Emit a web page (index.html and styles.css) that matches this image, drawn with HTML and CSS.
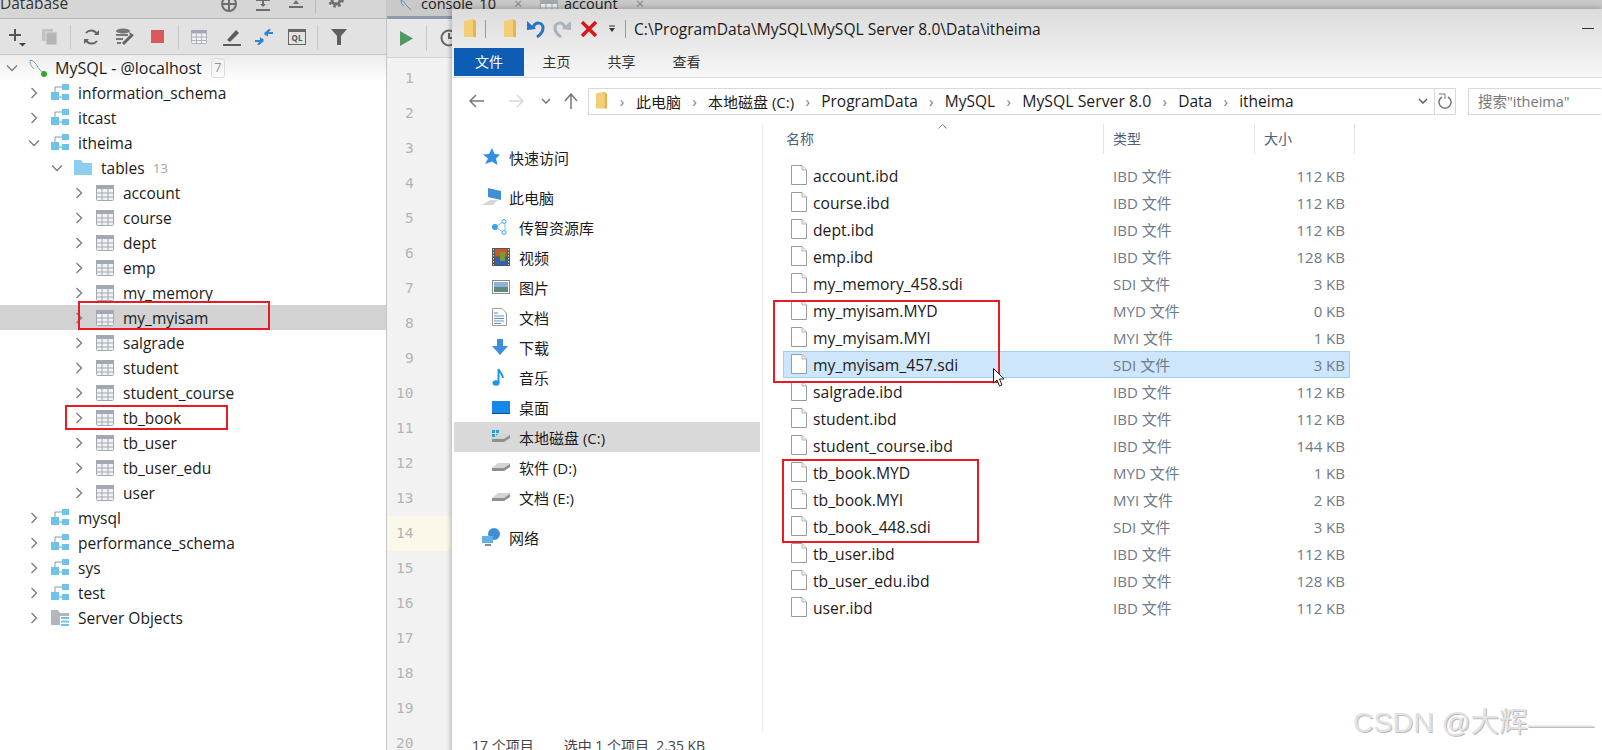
FILE: index.html
```html
<!DOCTYPE html>
<html lang="en">
<head>
    <meta charset="UTF-8">
    <meta name="viewport" content="width=device-width, initial-scale=1.0">
    <title>Database</title>
    <link rel="stylesheet" href="styles.css">
</head>
<body>
    <svg class="sprite" width="0" height="0">
        <symbol id="chev-r" viewBox="0 0 12 12"><path d="M3.5 1 L8.5 6 L3.5 11" fill="none" stroke="#7d7d7d" stroke-width="1.4"/></symbol>
        <symbol id="chev-d" viewBox="0 0 12 12"><path d="M1 3.5 L6 8.5 L11 3.5" fill="none" stroke="#7d7d7d" stroke-width="1.4"/></symbol>
        <symbol id="db" viewBox="0 0 18 18"><rect x="0" y="8" width="8" height="8" fill="#6fc3ea"/><rect x="11" y="0" width="7" height="6" fill="#6fc3ea"/><rect x="11" y="10" width="7" height="6" fill="#6fc3ea"/><path d="M4 8 V3 H11 M8 13 H11" fill="none" stroke="#8a9aa5" stroke-width="1"/></symbol>
        <symbol id="tbl" viewBox="0 0 18 16"><rect x=".5" y=".5" width="17" height="15" rx="1" fill="#f1f2f4" stroke="#a3a9b3"/><rect x="0" y="0" width="18" height="4" fill="#a3a9b3"/><path d="M6 4 V16 M12 4 V16 M0 8 H18 M0 12 H18" stroke="#a3a9b3" stroke-width="1"/></symbol>
        <symbol id="file" viewBox="0 0 16 20"><path d="M.5 .5 H11 L15.5 5 V19.5 H.5 Z" fill="#fff" stroke="#9b9b9b"/><path d="M11 .5 V5 H15.5" fill="#f0f0f0" stroke="#b5b5b5"/></symbol>
        <symbol id="yfolder" viewBox="0 0 14 20"><path d="M1 2 L10 0 V18 H1 Z" fill="#f2cf77"/><path d="M10 0 L13 2 V18 H10 Z" fill="#e4b550"/></symbol>
        <symbol id="drive" viewBox="0 0 18 10"><path d="M0 6 L6 1 H18 V5 L12 9 H0 Z" fill="#d4d4d4"/><path d="M0 6 H12 L18 2 V5 L12 9 H0 Z" fill="#8f8f8f"/></symbol>
    </svg>

    <!-- database panel -->
    <div class="db-panel">
        <div class="panel-head">
            <span class="panel-title">Database</span>
            <div class="head-icons">
                <svg width="18" height="18" viewBox="0 0 18 18"><circle cx="9" cy="9" r="7" fill="none" stroke="#6e6e6e" stroke-width="2"/><path d="M9 2 V16 M2 9 H16" stroke="#6e6e6e" stroke-width="2"/></svg>
                <svg width="16" height="18" viewBox="0 0 16 18"><path d="M1 15 H15 M1 5 H15 M8 6 V11" stroke="#6e6e6e" stroke-width="2" fill="none"/><path d="M5 9 H11 L8 12 Z" fill="#6e6e6e"/></svg>
                <svg width="16" height="18" viewBox="0 0 16 18"><path d="M1 1 H15 M1 12 H15" stroke="#6e6e6e" stroke-width="2" fill="none"/><path d="M5 9 H11 L8 5 Z" fill="#6e6e6e"/></svg>
                <i class="head-sep"></i>
                <svg width="16" height="18" viewBox="0 0 16 18"><circle cx="8" cy="5" r="4" fill="none" stroke="#6e6e6e" stroke-width="3"/><circle cx="8" cy="5" r="6.500" fill="none" stroke="#6e6e6e" stroke-width="2.500" stroke-dasharray="2.500 2.600"/></svg>
                <svg width="16" height="18" viewBox="0 0 16 18"><path d="M1 3 H15" stroke="#6e6e6e" stroke-width="2"/></svg>
            </div>
        </div>
        <div class="panel-tools">
            <svg width="18" height="22" viewBox="0 0 18 22"><path d="M6 3 V15 M0 9 H12" stroke="#555" stroke-width="2"/><path d="M10 17 H17 L13.5 20.5 Z" fill="#444"/></svg>
            <svg class="t-copy" width="16" height="16" viewBox="0 0 16 16"><rect x="0" y="0" width="11" height="12" fill="#c2c2c2"/><rect x="4" y="3" width="11" height="13" fill="#b4b4b4" stroke="#dcdcdc"/></svg>
            <i class="tool-sep s-1"></i>
            <svg class="t-refresh" width="17" height="16" viewBox="0 0 17 16"><path d="M14 5 A6.5 6.5 0 0 0 3 4 M3 11 A6.5 6.5 0 0 0 14 12" fill="none" stroke="#666" stroke-width="2"/><path d="M11 6 H16 V1 Z M6 10 H1 V15 Z" fill="#666"/></svg>
            <svg class="t-wrench" width="20" height="18" viewBox="0 0 20 18"><ellipse cx="8" cy="3" rx="7" ry="2.5" fill="#777"/><path d="M1 7 H13 M1 11 H8 M2 15 H6" stroke="#777" stroke-width="2"/><path d="M8 16 L16 8" stroke="#666" stroke-width="3"/><path d="M14 4 L19 7 L16 10 Z" fill="#666"/></svg>
            <i class="t-stop"></i>
            <i class="tool-sep s-2"></i>
            <svg class="t-table" width="18" height="14"><use href="#tbl"/></svg>
            <svg class="t-edit" width="18" height="18" viewBox="0 0 18 18"><path d="M4 12 L13 2 L16 5 L7 14 Z" fill="#5c5c5c"/><path d="M0 17 H18" stroke="#5c5c5c" stroke-width="2"/></svg>
            <svg class="t-compare" width="18" height="16" viewBox="0 0 18 16"><path d="M0 12 H6 M12 4 H18 M8 10 L3 16 M10 6 L15 0" stroke="#2b86d6" stroke-width="2"/><path d="M5 8 L9 12 L5 15 Z M13 1 L9 4 L13 8 Z" fill="#2b86d6"/></svg>
            <span class="t-ql">QL</span>
            <i class="tool-sep s-3"></i>
            <svg class="t-filter" width="16" height="16" viewBox="0 0 16 16"><path d="M0 0 H16 L10 7 V16 H6 V7 Z" fill="#5f5f5f"/></svg>
        </div>
        <ul class="tree">
            <li class="node d0"><svg class="chev" width="12" height="12"><use href="#chev-d"/></svg>
                <svg class="ico" width="18" height="18" viewBox="0 0 18 18"><path d="M1 1 C7 2 8 8 11 11 C13 13 14 14 14 14 M1 1 C1 6 3 8 5 10" fill="none" stroke="#6b9dc2" stroke-width="1"/><circle cx="15" cy="15" r="3" fill="#2fa52f"/></svg>
                <span class="label root-label">MySQL - @localhost</span><span class="count">7</span></li>
            <li class="node d1"><svg class="chev" width="12" height="12"><use href="#chev-r"/></svg><svg class="ico" width="18" height="18"><use href="#db"/></svg><span class="label">information_schema</span></li>
            <li class="node d1"><svg class="chev" width="12" height="12"><use href="#chev-r"/></svg><svg class="ico" width="18" height="18"><use href="#db"/></svg><span class="label">itcast</span></li>
            <li class="node d1"><svg class="chev" width="12" height="12"><use href="#chev-d"/></svg><svg class="ico" width="18" height="18"><use href="#db"/></svg><span class="label">itheima</span></li>
            <li class="node d2"><svg class="chev" width="12" height="12"><use href="#chev-d"/></svg><svg class="ico" width="18" height="15" viewBox="0 0 18 15"><path d="M0 0 H7 L9 3 H18 V15 H0 Z" fill="#8dcdf0"/></svg><span class="label">tables</span><span class="muted">13</span></li>
            <li class="node d3"><svg class="chev" width="12" height="12"><use href="#chev-r"/></svg><svg class="ico" width="18" height="16"><use href="#tbl"/></svg><span class="label">account</span></li>
            <li class="node d3"><svg class="chev" width="12" height="12"><use href="#chev-r"/></svg><svg class="ico" width="18" height="16"><use href="#tbl"/></svg><span class="label">course</span></li>
            <li class="node d3"><svg class="chev" width="12" height="12"><use href="#chev-r"/></svg><svg class="ico" width="18" height="16"><use href="#tbl"/></svg><span class="label">dept</span></li>
            <li class="node d3"><svg class="chev" width="12" height="12"><use href="#chev-r"/></svg><svg class="ico" width="18" height="16"><use href="#tbl"/></svg><span class="label">emp</span></li>
            <li class="node d3"><svg class="chev" width="12" height="12"><use href="#chev-r"/></svg><svg class="ico" width="18" height="16"><use href="#tbl"/></svg><span class="label">my_memory</span></li>
            <li class="node d3 selected"><svg class="chev" width="12" height="12"><use href="#chev-r"/></svg><svg class="ico" width="18" height="16"><use href="#tbl"/></svg><span class="label">my_myisam</span></li>
            <li class="node d3"><svg class="chev" width="12" height="12"><use href="#chev-r"/></svg><svg class="ico" width="18" height="16"><use href="#tbl"/></svg><span class="label">salgrade</span></li>
            <li class="node d3"><svg class="chev" width="12" height="12"><use href="#chev-r"/></svg><svg class="ico" width="18" height="16"><use href="#tbl"/></svg><span class="label">student</span></li>
            <li class="node d3"><svg class="chev" width="12" height="12"><use href="#chev-r"/></svg><svg class="ico" width="18" height="16"><use href="#tbl"/></svg><span class="label">student_course</span></li>
            <li class="node d3"><svg class="chev" width="12" height="12"><use href="#chev-r"/></svg><svg class="ico" width="18" height="16"><use href="#tbl"/></svg><span class="label">tb_book</span></li>
            <li class="node d3"><svg class="chev" width="12" height="12"><use href="#chev-r"/></svg><svg class="ico" width="18" height="16"><use href="#tbl"/></svg><span class="label">tb_user</span></li>
            <li class="node d3"><svg class="chev" width="12" height="12"><use href="#chev-r"/></svg><svg class="ico" width="18" height="16"><use href="#tbl"/></svg><span class="label">tb_user_edu</span></li>
            <li class="node d3"><svg class="chev" width="12" height="12"><use href="#chev-r"/></svg><svg class="ico" width="18" height="16"><use href="#tbl"/></svg><span class="label">user</span></li>
            <li class="node d1"><svg class="chev" width="12" height="12"><use href="#chev-r"/></svg><svg class="ico" width="18" height="18"><use href="#db"/></svg><span class="label">mysql</span></li>
            <li class="node d1"><svg class="chev" width="12" height="12"><use href="#chev-r"/></svg><svg class="ico" width="18" height="18"><use href="#db"/></svg><span class="label">performance_schema</span></li>
            <li class="node d1"><svg class="chev" width="12" height="12"><use href="#chev-r"/></svg><svg class="ico" width="18" height="18"><use href="#db"/></svg><span class="label">sys</span></li>
            <li class="node d1"><svg class="chev" width="12" height="12"><use href="#chev-r"/></svg><svg class="ico" width="18" height="18"><use href="#db"/></svg><span class="label">test</span></li>
            <li class="node d1"><svg class="chev" width="12" height="12"><use href="#chev-r"/></svg><svg class="ico" width="18" height="18" viewBox="0 0 18 18"><path d="M0 1 H7 L9 4 H18 V16 H0 Z" fill="#b3b6bc"/><rect x="9" y="7" width="9" height="11" fill="#fff"/><path d="M10 9 H18 M10 12.500 H18 M10 16 H18" stroke="#6fc3ea" stroke-width="2"/></svg><span class="label">Server Objects</span></li>
        </ul>
    </div>

    <!-- editor behind the explorer window -->
    <div class="editor">
        <div class="tab-bar">
            <span class="tab tab-console">
                <svg width="15" height="12" viewBox="0 0 15 12"><path d="M1 0 C4 1 5 4 7 6 L11 10 M1 0 C1 3 2 5 4 6" fill="none" stroke="#5c93bb"/></svg>
                console_10<b class="tab-x">×</b>
            </span>
            <span class="tab tab-account">
                <svg width="18" height="16"><use href="#tbl"/></svg>
                account<b class="tab-x">×</b>
            </span>
        </div>
        <div class="edit-tools">
            <svg width="13" height="15" viewBox="0 0 13 15"><path d="M0 0 L13 7.500 L0 15 Z" fill="#4f9a62"/></svg>
            <i class="tool-sep"></i>
            <svg width="18" height="18" viewBox="0 0 18 18"><circle cx="9" cy="9" r="7.500" fill="none" stroke="#666" stroke-width="2"/><path d="M9 4 V9 H13" fill="none" stroke="#666" stroke-width="2"/></svg>
        </div>
        <ol class="gutter">
            <li>1</li><li>2</li><li>3</li><li>4</li><li>5</li><li>6</li><li>7</li><li>8</li><li>9</li><li>10</li>
            <li>11</li><li>12</li><li>13</li><li class="current">14</li><li>15</li><li>16</li><li>17</li><li>18</li><li>19</li><li>20</li>
        </ol>
    </div>

    <!-- explorer window -->
    <div class="explorer">
        <div class="title-row">
            <svg class="q-a" width="14" height="20"><use href="#yfolder"/></svg>
            <i class="q-sep q-s1"></i>
            <svg class="q-b" width="14" height="20"><use href="#yfolder"/></svg>
            <svg class="q-undo" width="20" height="20" viewBox="0 0 20 20"><path d="M7 9 C9 2 17 3 17 9 C17 13 14 16 11 18" fill="none" stroke="#2a73c4" stroke-width="3"/><path d="M1 2 L10 10 L1 11 Z" fill="#2a73c4"/></svg>
            <svg class="q-redo" width="20" height="20" viewBox="0 0 20 20"><path d="M13 9 C11 2 3 3 3 9 C3 13 6 16 9 18" fill="none" stroke="#a9b3bd" stroke-width="3"/><path d="M19 2 L10 10 L19 11 Z" fill="#a9b3bd"/></svg>
            <svg class="q-x" width="16" height="16" viewBox="0 0 16 16"><path d="M1 1 L15 15 M15 1 L1 15" stroke="#d9181e" stroke-width="3.500"/></svg>
            <svg class="q-more" width="8" height="8" viewBox="0 0 8 8"><path d="M1 1 H7" stroke="#333"/><path d="M1 3 H7 L4 7 Z" fill="#333"/></svg>
            <i class="q-sep q-s2"></i>
            <span class="title-path">C:\ProgramData\MySQL\MySQL Server 8.0\Data\itheima</span>
            <span class="win-min"></span>
        </div>
        <div class="ribbon">
            <span class="rib-file">文件</span>
            <span class="rib-tab">主页</span>
            <span class="rib-tab">共享</span>
            <span class="rib-tab">查看</span>
        </div>
        <div class="address-row">
            <svg class="nav-back" width="16" height="14" viewBox="0 0 16 14"><path d="M15 7 H2 M7 1 L1 7 L7 13" fill="none" stroke="#777" stroke-width="1.500"/></svg>
            <svg class="nav-fwd" width="16" height="14" viewBox="0 0 16 14"><path d="M1 7 H14 M9 1 L15 7 L9 13" fill="none" stroke="#d8d8d8" stroke-width="1.500"/></svg>
            <svg class="nav-down" width="10" height="6" viewBox="0 0 10 6"><path d="M1 1 L5 5 L9 1" fill="none" stroke="#777" stroke-width="1.500"/></svg>
            <svg class="nav-up" width="14" height="16" viewBox="0 0 14 16"><path d="M7 16 V2 M1 8 L7 1 L13 8" fill="none" stroke="#777" stroke-width="1.500"/></svg>
            <div class="address">
                <svg width="13" height="20"><use href="#yfolder"/></svg>
                <span class="crumbs">
                    <i>›</i><span class="cn">此电脑</span>
                    <i>›</i><span class="cn">本地磁盘 (C:)</span>
                    <i>›</i><span>ProgramData</span>
                    <i>›</i><span>MySQL</span>
                    <i>›</i><span class="wide">MySQL Server 8.0</span>
                    <i>›</i><span>Data</span>
                    <i>›</i><span>itheima</span>
                </span>
                <svg class="addr-drop" width="10" height="6" viewBox="0 0 10 6"><path d="M1 1 L5 5 L9 1" fill="none" stroke="#555" stroke-width="1.300"/></svg>
                <span class="addr-refresh">
                    <svg width="14" height="16" viewBox="0 0 14 16"><path d="M4 4 A6 6 0 1 0 10 4" fill="none" stroke="#777" stroke-width="1.500"/><path d="M1 1 H7 V6" fill="none" stroke="#777" stroke-width="1"/></svg>
                </span>
            </div>
            <div class="search">搜索"itheima"</div>
        </div>
        <div class="content">
            <nav class="nav-pane">
                <a class="nav-item top"><svg width="18" height="18" viewBox="0 0 18 18"><path d="M10 0 L12.500 6 L18 6.500 L14 10.500 L15.500 17 L10 13.500 L3 16 L6 10.500 L1 6.500 L7 6 Z" fill="#2f8ee6"/></svg><span>快速访问</span></a>
                <div class="nav-group">
                    <a class="nav-item top"><svg width="20" height="18" viewBox="0 0 20 18"><path d="M6 0 L19 3 V12 L6 9 Z" fill="#3f8fd4"/><path d="M0 17 L8 12 H16 L11 17 Z" fill="#d6d6d6"/></svg><span>此电脑</span></a>
                    <a class="nav-item"><svg width="16" height="16" viewBox="0 0 16 16"><circle cx="3" cy="8" r="3" fill="#38a3ee"/><circle cx="12" cy="2.500" r="2" fill="none" stroke="#38a3ee"/><circle cx="12" cy="13.500" r="2" fill="none" stroke="#38a3ee"/><path d="M5 7 L10 3.500 M5 9 L10 12.500 M13 5 L13 11" stroke="#7fbfe8"/></svg><span>传智资源库</span></a>
                    <a class="nav-item"><svg width="18" height="18" viewBox="0 0 18 18"><rect width="18" height="18" fill="#555"/><rect x="3" y="1" width="12" height="7.500" fill="#c55a2e"/><rect x="3" y="9.500" width="12" height="7.500" fill="#2c62b8"/><rect x="8" y="4" width="5" height="9" fill="#7c9a33"/><path d="M1.500 1 V17 M16.500 1 V17" stroke="#ddd" stroke-dasharray="1.500 1.500"/></svg><span>视频</span></a>
                    <a class="nav-item"><svg width="18" height="14" viewBox="0 0 18 14"><rect x=".5" y=".5" width="17" height="13" fill="#fff" stroke="#8c8c8c"/><rect x="2" y="2" width="14" height="5" fill="#8db4d8"/><rect x="2" y="7" width="14" height="5" fill="#5d8a80"/></svg><span>图片</span></a>
                    <a class="nav-item"><svg width="15" height="18" viewBox="0 0 15 18"><path d="M.5 .5 H10 L14.500 5 V17.500 H.5 Z" fill="#fff" stroke="#9b9b9b"/><path d="M2 5 H6 M2 8 H12 M2 10.500 H12 M2 13 H12 M2 15.500 H9" stroke="#5b8fc0"/></svg><span>文档</span></a>
                    <a class="nav-item"><svg width="16" height="16" viewBox="0 0 16 16"><path d="M5 0 H11 V7 H16 L8 16 L0 7 H5 Z" fill="#3b8de0"/></svg><span>下载</span></a>
                    <a class="nav-item"><svg width="12" height="18" viewBox="0 0 12 18"><ellipse cx="4" cy="15" rx="3.500" ry="2.800" fill="#1e96e8"/><path d="M6.500 15 V1 C7 4 11 6 11 10" fill="none" stroke="#1e96e8" stroke-width="2"/></svg><span>音乐</span></a>
                    <a class="nav-item"><svg width="18" height="13" viewBox="0 0 18 13"><rect width="18" height="13" fill="#1788e8"/><rect y="12" width="18" height="1" fill="#0c4f90"/></svg><span>桌面</span></a>
                    <a class="nav-item active"><svg width="19" height="14" viewBox="0 0 19 14"><path d="M0 0 H3 V3 H0 Z M4 0 H7 V3 H4 Z M0 4 H3 V7 H0 Z M4 4 H7 V7 H4 Z" fill="#23a0ea"/><use href="#drive" y="3" width="18" height="10"/></svg><span>本地磁盘 (C:)</span></a>
                    <a class="nav-item"><svg width="18" height="10"><use href="#drive"/></svg><span>软件 (D:)</span></a>
                    <a class="nav-item"><svg width="18" height="10"><use href="#drive"/></svg><span>文档 (E:)</span></a>
                </div>
                <div class="nav-group">
                    <a class="nav-item top"><svg width="18" height="18" viewBox="0 0 18 18"><circle cx="12" cy="6" r="6" fill="#3f8fd4"/><rect x="0" y="8" width="11" height="7" fill="#60b0ea"/><path d="M3 17 H9" stroke="#888" stroke-width="2"/></svg><span>网络</span></a>
                </div>
            </nav>
            <section class="files">
                <div class="col-head">
                    <span class="col-name">名称<svg class="sort" width="9" height="5" viewBox="0 0 9 5"><path d="M.5 4.500 L4.500 .5 L8.500 4.500" fill="none" stroke="#8a8a8a"/></svg></span>
                    <span class="col-type">类型</span>
                    <span class="col-size">大小</span>
                </div>
                <div class="file-row"><svg width="16" height="20"><use href="#file"/></svg><span class="f-name">account.ibd</span><span class="f-type">IBD 文件</span><span class="f-size">112 KB</span></div>
                <div class="file-row"><svg width="16" height="20"><use href="#file"/></svg><span class="f-name">course.ibd</span><span class="f-type">IBD 文件</span><span class="f-size">112 KB</span></div>
                <div class="file-row"><svg width="16" height="20"><use href="#file"/></svg><span class="f-name">dept.ibd</span><span class="f-type">IBD 文件</span><span class="f-size">112 KB</span></div>
                <div class="file-row"><svg width="16" height="20"><use href="#file"/></svg><span class="f-name">emp.ibd</span><span class="f-type">IBD 文件</span><span class="f-size">128 KB</span></div>
                <div class="file-row"><svg width="16" height="20"><use href="#file"/></svg><span class="f-name">my_memory_458.sdi</span><span class="f-type">SDI 文件</span><span class="f-size">3 KB</span></div>
                <div class="file-row"><svg width="16" height="20"><use href="#file"/></svg><span class="f-name">my_myisam.MYD</span><span class="f-type">MYD 文件</span><span class="f-size">0 KB</span></div>
                <div class="file-row"><svg width="16" height="20"><use href="#file"/></svg><span class="f-name">my_myisam.MYI</span><span class="f-type">MYI 文件</span><span class="f-size">1 KB</span></div>
                <div class="file-row selected"><svg width="16" height="20"><use href="#file"/></svg><span class="f-name">my_myisam_457.sdi</span><span class="f-type">SDI 文件</span><span class="f-size">3 KB</span></div>
                <div class="file-row"><svg width="16" height="20"><use href="#file"/></svg><span class="f-name">salgrade.ibd</span><span class="f-type">IBD 文件</span><span class="f-size">112 KB</span></div>
                <div class="file-row"><svg width="16" height="20"><use href="#file"/></svg><span class="f-name">student.ibd</span><span class="f-type">IBD 文件</span><span class="f-size">112 KB</span></div>
                <div class="file-row"><svg width="16" height="20"><use href="#file"/></svg><span class="f-name">student_course.ibd</span><span class="f-type">IBD 文件</span><span class="f-size">144 KB</span></div>
                <div class="file-row"><svg width="16" height="20"><use href="#file"/></svg><span class="f-name">tb_book.MYD</span><span class="f-type">MYD 文件</span><span class="f-size">1 KB</span></div>
                <div class="file-row"><svg width="16" height="20"><use href="#file"/></svg><span class="f-name">tb_book.MYI</span><span class="f-type">MYI 文件</span><span class="f-size">2 KB</span></div>
                <div class="file-row"><svg width="16" height="20"><use href="#file"/></svg><span class="f-name">tb_book_448.sdi</span><span class="f-type">SDI 文件</span><span class="f-size">3 KB</span></div>
                <div class="file-row"><svg width="16" height="20"><use href="#file"/></svg><span class="f-name">tb_user.ibd</span><span class="f-type">IBD 文件</span><span class="f-size">112 KB</span></div>
                <div class="file-row"><svg width="16" height="20"><use href="#file"/></svg><span class="f-name">tb_user_edu.ibd</span><span class="f-type">IBD 文件</span><span class="f-size">128 KB</span></div>
                <div class="file-row"><svg width="16" height="20"><use href="#file"/></svg><span class="f-name">user.ibd</span><span class="f-type">IBD 文件</span><span class="f-size">112 KB</span></div>
            </section>
        </div>
        <div class="status-bar"><span>17 个项目</span><span>选中 1 个项目&nbsp; 2.35 KB</span></div>
    </div>

    <!-- red marks drawn on the screenshot -->
    <div class="mark mark-tree-a"></div>
    <div class="mark mark-tree-b"></div>
    <div class="mark mark-files-a"></div>
    <div class="mark mark-files-b"></div>

    <svg class="cursor" width="12" height="19" viewBox="0 0 12 19"><path d="M.5 .5 V15 L4 12 L6.500 18 L9 17 L6.500 11 L11 11 Z" fill="#fff" stroke="#222"/></svg>

    <div class="watermark">CSDN @大辉<span class="wm-dash">———</span></div>
</body>
</html>
```

FILE: styles.css
```css
* {
    box-sizing: border-box;
}

html, body {
    height: 750px;
}

body {
    display: flex;
    margin: 0;
    overflow: hidden;
    position: relative;
    background: #fff;
    font-family: "Open Sans", "Noto Sans CJK SC", sans-serif;
    color: #1b1b1b;
}

.sprite {
    position: absolute;
}

ul, ol {
    list-style: none;
    margin: 0;
    padding: 0;
}

/* database panel */
.db-panel {
    width: 386px;
    flex: none;
    background: #fff;
}

.panel-head {
    display: flex;
    height: 19px;
    overflow: hidden;
    background: #d6d6d6;
    border-bottom: 1px solid #b9b9b9;
}

.panel-title {
    font-size: 15.5px;
    line-height: 15px;
    margin-top: -4px;
    color: #333;
}

.head-icons {
    display: flex;
    align-items: flex-start;
    gap: 17px;
    margin-left: auto;
    margin-right: 9px;
    margin-top: -5px;
}

.head-sep {
    width: 1px;
    height: 19px;
    background: #bdbdbd;
    margin: 0 -5px 0 -6px;
}

.panel-tools {
    display: flex;
    align-items: center;
    height: 36px;
    padding-left: 9px;
    background: #e2e2e2;
    border-bottom: 1px solid #c6c6c6;
}

.panel-tools svg,
.panel-tools i,
.panel-tools span {
    flex: none;
}

.tool-sep {
    width: 1px;
    height: 24px;
    background: #c8c8c8;
}

.t-copy { margin-left: 15px; }
.s-1 { margin-left: 12px; }
.t-refresh { margin-left: 12px; }
.t-wrench { margin-left: 15px; }

.t-stop {
    width: 13px;
    height: 13px;
    margin-left: 16px;
    background: #d9595c;
}

.s-2 { margin-left: 14px; }
.t-table { margin-left: 11px; }
.t-edit { margin-left: 15px; }
.t-compare { margin-left: 14px; }

.t-ql {
    width: 18px;
    height: 16px;
    margin-left: 15px;
    border: 1px solid #666;
    border-top-width: 3px;
    font-size: 8px;
    line-height: 11px;
    text-align: center;
    font-weight: 700;
    color: #555;
}

.s-3 { margin-left: 11px; }
.t-filter { margin-left: 13px; }

.tree {
    background: linear-gradient(#ececec, #fff 26px);
}

.node {
    display: flex;
    align-items: center;
    height: 25px;
    font-size: 15.5px;
}

.d0 { padding-left: 6px; }
.d1 { padding-left: 28px; }
.d2 { padding-left: 51px; }
.d3 { padding-left: 73px; }

.chev {
    flex: none;
}

.ico {
    flex: none;
    margin-left: 11px;
}

.label {
    margin-left: 9px;
    white-space: nowrap;
}

.root-label {
    margin-left: 8px;
    font-size: 16px;
}

.muted {
    margin-left: 8px;
    font-size: 13.5px;
    color: #a6a6a6;
}

.count {
    margin-left: 9px;
    width: 14px;
    height: 20px;
    border: 1px solid #dcdcdc;
    border-radius: 3px;
    font-size: 12px;
    line-height: 18px;
    text-align: center;
    color: #8f8f8f;
}

.node.selected {
    background: #d2d2d2;
}

/* editor */
.editor {
    flex: 1;
    border-left: 1px solid #c4c4c4;
}

.tab-bar {
    display: flex;
    height: 19px;
    overflow: hidden;
    background: #c9c9c9;
    border-bottom: 3px solid #8d9bae;
    font-size: 14.5px;
}

.tab {
    display: flex;
    gap: 6px;
    height: 16px;
    margin-top: -6px;
    line-height: 19px;
    align-items: flex-start;
}

.tab svg {
    margin-top: 6px;
}

.tab-console {
    padding-left: 13px;
    width: 153px;
}

.tab-account {
    padding-left: 0;
}

.tab-x {
    margin-left: 12px;
    font-weight: 400;
    color: #8a8a8a;
}

.edit-tools {
    display: flex;
    align-items: center;
    height: 39px;
    padding-left: 13px;
    gap: 13px;
    background: #e8e8e8;
    border-bottom: 1px solid #d4d4d4;
}

.edit-tools .tool-sep {
    height: 26px;
}

.gutter {
    height: 692px;
    background: #f2f2f2;
    padding-top: 3px;
}

.gutter li {
    height: 35px;
    line-height: 35px;
    width: 66px;
    padding-left: 9px;
    font-family: "DejaVu Sans Mono", monospace;
    font-size: 14.5px;
    color: #b4b4b4;
    text-align: left;
}

.gutter li:nth-child(-n+9) {
    padding-left: 18px;
}

.gutter li.current {
    background: #fbf8ea;
}

/* explorer window */
.explorer {
    position: absolute;
    left: 452px;
    top: 9px;
    width: 1150px;
    height: 751px;
    display: flex;
    flex-direction: column;
    background: #fff;
    box-shadow: -3px 0 3px rgba(0, 0, 0, 0.12), 0 -3px 5px rgba(0, 0, 0, 0.12);
}

.title-row {
    display: flex;
    align-items: center;
    height: 39px;
    flex: none;
    font-size: 15.6px;
    background: linear-gradient(#dcdcdc, #ebebeb);
}

.q-a { margin-left: 11px; }
.q-sep { width: 1px; height: 18px; background: #9a9a9a; }
.q-s1 { margin-left: 8px; }
.q-b { margin-left: 17px; }
.q-undo { margin-left: 9px; }
.q-redo { margin-left: 6px; }
.q-x { margin-left: 9px; }
.q-more { margin-left: 11px; }
.q-s2 { margin-left: 9px; }

.title-path {
    margin-left: 8px;
    white-space: nowrap;
}

.win-min {
    width: 12px;
    height: 1px;
    margin-left: auto;
    margin-right: 8px;
    background: #333;
}

.ribbon {
    display: flex;
    height: 30px;
    flex: none;
    font-size: 14px;
    background: linear-gradient(#ebebeb, #f7f7f7);
    border-bottom: 1px solid #dcdcdc;
}

.rib-file {
    width: 70px;
    height: 28px;
    margin-left: 2px;
    line-height: 28px;
    text-align: center;
    color: #fff;
    background: #0c5db3;
}

.rib-tab {
    width: 65px;
    line-height: 28px;
    text-align: center;
    color: #333;
}

.address-row {
    position: relative;
    display: flex;
    align-items: center;
    height: 46px;
    flex: none;
    font-size: 15px;
}

.nav-back { margin-left: 17px; }
.nav-fwd { margin-left: 23px; }
.nav-down { margin-left: 17px; }
.nav-up { margin-left: 13px; }

.address {
    display: flex;
    align-items: center;
    width: 868px;
    height: 27px;
    margin-left: 10px;
    padding-left: 6px;
    border: 1px solid #d9d9d9;
    background: #fff;
}

.crumbs {
    display: flex;
    align-items: center;
    white-space: nowrap;
}

.crumbs span {
    font-size: 15.5px;
}

.crumbs .cn {
    font-size: 15px;
}

.crumbs .wide {
    font-size: 15.8px;
}

.crumbs i {
    width: 27px;
    text-align: center;
    font-style: normal;
    color: #7d7d7d;
}

.crumbs i:first-child {
    width: 28px;
}

.addr-drop {
    margin-left: auto;
    margin-right: 6px;
}

.addr-refresh {
    display: flex;
    align-items: center;
    justify-content: center;
    width: 21px;
    height: 100%;
    border-left: 1px solid #d9d9d9;
}

.search {
    width: 133px;
    height: 27px;
    margin-left: 12px;
    padding-left: 9px;
    border: 1px solid #d9d9d9;
    border-right: none;
    line-height: 25px;
    font-size: 14.5px;
    color: #777;
}

.content {
    display: flex;
    flex: 1;
    min-height: 0;
}

.nav-pane {
    width: 311px;
    flex: none;
    padding: 18px 2px 0 2px;
    border-right: 1px solid #ececec;
    font-size: 15px;
}

.nav-item {
    display: flex;
    align-items: center;
    height: 30px;
    padding-left: 40px;
}

.nav-item svg {
    flex: none;
    margin-right: 6px;
    margin-left: -2px;
}

.nav-item span {
    position: absolute;
    left: 67px;
}

.nav-item.top {
    padding-left: 30px;
}

.nav-item.top span {
    left: 57px;
}

.nav-item.active {
    background: #d9d9d9;
}

.nav-group {
    margin-top: 10px;
}

.files {
    flex: 1;
    padding-left: 20px;
    font-size: 15px;
}

.col-head {
    display: grid;
    grid-template-columns: 321px 151px 100px;
    height: 30px;
    margin-bottom: 8px;
    color: #4c607a;
    font-size: 14px;
}

.col-head span {
    position: relative;
    padding-left: 9px;
    line-height: 30px;
    border-right: 1px solid #e5e5e5;
}

.col-name {
    padding-left: 3px !important;
}

.sort {
    position: absolute;
    top: 0;
    right: 156px;
}

.file-row {
    display: grid;
    grid-template-columns: 16px 306px 170px 62px;
    align-items: center;
    width: 567px;
    height: 27px;
    padding-left: 7px;
    border: 1px solid transparent;
}

.file-row svg {
    margin-top: -2px;
}

.f-name {
    padding-left: 6px;
    font-size: 15.7px;
    white-space: nowrap;
}

.f-type {
    color: #6e7a86;
}

.f-size {
    text-align: right;
    color: #6e7a86;
}

.file-row.selected {
    background: #cde6fb;
    border-color: #9fcff3;
}

.status-bar {
    display: flex;
    flex: none;
    height: 28px;
    padding-left: 20px;
    gap: 30px;
    font-size: 14px;
    line-height: 28px;
    color: #444;
}

/* annotations */
.mark {
    position: absolute;
    border: 2px solid #e81b25;
}

.mark-tree-a { left: 78px; top: 301px; width: 192px; height: 29px; }
.mark-tree-b { left: 65px; top: 405px; width: 163px; height: 25px; }
.mark-files-a { left: 773px; top: 300px; width: 227px; height: 83px; }
.mark-files-b { left: 782px; top: 459px; width: 197px; height: 84px; }

.cursor {
    position: absolute;
    left: 993px;
    top: 368px;
}

.watermark {
    position: absolute;
    left: 1353px;
    top: 705px;
    font-family: "Liberation Sans", "Noto Sans CJK SC", sans-serif;
    font-size: 28.5px;
    line-height: 34px;
    white-space: nowrap;
    color: #e2e2e2;
    text-shadow: 1px 1px 0 #bdbdbd;
}

.wm-dash {
    font-size: 22px;
}
```
